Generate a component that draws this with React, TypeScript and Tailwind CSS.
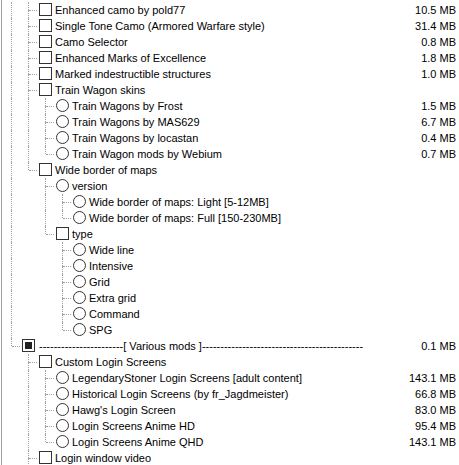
import React from 'react';

type Kind = 'check' | 'radio' | 'partial';

type Item = {
  level: number;
  kind: Kind;
  label: string;
  size?: string;
  group?: boolean;
};

const items: Item[] = [
  { level: 1, kind: 'check', label: 'Enhanced camo by pold77', size: '10.5 MB' },
  { level: 1, kind: 'check', label: 'Single Tone Camo (Armored Warfare style)', size: '31.4 MB' },
  { level: 1, kind: 'check', label: 'Camo Selector', size: '0.8 MB' },
  { level: 1, kind: 'check', label: 'Enhanced Marks of Excellence', size: '1.8 MB' },
  { level: 1, kind: 'check', label: 'Marked indestructible structures', size: '1.0 MB' },
  { level: 1, kind: 'check', label: 'Train Wagon skins' },
  { level: 2, kind: 'radio', label: 'Train Wagons by Frost', size: '1.5 MB' },
  { level: 2, kind: 'radio', label: 'Train Wagons by MAS629', size: '6.7 MB' },
  { level: 2, kind: 'radio', label: 'Train Wagons by locastan', size: '0.4 MB' },
  { level: 2, kind: 'radio', label: 'Train Wagon mods by Webium', size: '0.7 MB' },
  { level: 1, kind: 'check', label: 'Wide border of maps' },
  { level: 2, kind: 'radio', label: 'version' },
  { level: 3, kind: 'radio', label: 'Wide border of maps: Light [5-12MB]' },
  { level: 3, kind: 'radio', label: 'Wide border of maps: Full [150-230MB]' },
  { level: 2, kind: 'check', label: 'type' },
  { level: 3, kind: 'radio', label: 'Wide line' },
  { level: 3, kind: 'radio', label: 'Intensive' },
  { level: 3, kind: 'radio', label: 'Grid' },
  { level: 3, kind: 'radio', label: 'Extra grid' },
  { level: 3, kind: 'radio', label: 'Command' },
  { level: 3, kind: 'radio', label: 'SPG' },
  {
    level: 0,
    kind: 'partial',
    label: '-'.repeat(23) + '[ Various mods ]' + '-'.repeat(44),
    size: '0.1 MB',
    group: true,
  },
  { level: 1, kind: 'check', label: 'Custom Login Screens' },
  { level: 2, kind: 'radio', label: 'LegendaryStoner Login Screens [adult content]', size: '143.1 MB' },
  { level: 2, kind: 'radio', label: 'Historical Login Screens (by fr_Jagdmeister)', size: '66.8 MB' },
  { level: 2, kind: 'radio', label: "Hawg's Login Screen", size: '83.0 MB' },
  { level: 2, kind: 'radio', label: 'Login Screens Anime HD', size: '95.4 MB' },
  { level: 2, kind: 'radio', label: 'Login Screens Anime QHD', size: '143.1 MB' },
  { level: 1, kind: 'check', label: 'Login window video' },
];

// the list keeps going below the visible part with another level-1 entry
const levels = items.map((it) => it.level).concat([1]);

// does the branch at level k still have a sibling further down?
function continues(i: number, k: number) {
  for (let j = i + 1; j < levels.length; j++) {
    if (levels[j] < k) return false;
    if (levels[j] === k) return true;
  }
  return false;
}

function Mark({ kind }: { kind: Kind }) {
  if (kind === 'radio') {
    return <div className="mt-px h-[13px] w-[13px] shrink-0 rounded-full border border-[#333] bg-white" />;
  }
  return (
    <div className="mt-px flex h-[13px] w-[13px] shrink-0 items-center justify-center border border-[#333] bg-white">
      {kind === 'partial' && <div className="h-[7px] w-[7px] bg-[#222]" />}
    </div>
  );
}

function Row({ item, index }: { item: Item; index: number }) {
  const cols = [];
  for (let k = 0; k < item.level; k++) {
    cols.push(
      <div key={k} className="relative h-4 w-[17px] shrink-0">
        {continues(index, k) && (
          <div className="absolute inset-y-0 left-[8px] border-l border-dotted border-[#a0a0a0]" />
        )}
      </div>
    );
  }

  return (
    <div className="flex h-4 items-start whitespace-nowrap">
      {cols}
      <div className="relative h-4 w-[17px] shrink-0">
        <div className="absolute left-[8px] top-0 h-[8px] border-l border-dotted border-[#a0a0a0]" />
        {continues(index, item.level) && (
          <div className="absolute left-[8px] top-[8px] h-[8px] border-l border-dotted border-[#a0a0a0]" />
        )}
        <div className="absolute left-[9px] top-[8px] w-[8px] border-t border-dotted border-[#a0a0a0]" />
      </div>
      <div className="ml-[2px]">
        <Mark kind={item.kind} />
      </div>
      <span className={(item.group ? 'ml-[4px]' : 'ml-[3px]') + ' leading-4'}>{item.label}</span>
      {item.size && <span className="ml-auto pr-[3px] leading-4">{item.size}</span>}
    </div>
  );
}

export default function App() {
  return (
    <div className="h-[465px] w-[459px] overflow-hidden bg-white pl-px font-['Liberation_Sans',Arial,sans-serif] text-[11px] text-black">
      <div className="h-full border-l border-[#a0a0a0] pl-px pt-[2px]">
        {items.map((item, i) => (
          <Row key={i} item={item} index={i} />
        ))}
      </div>
    </div>
  );
}
